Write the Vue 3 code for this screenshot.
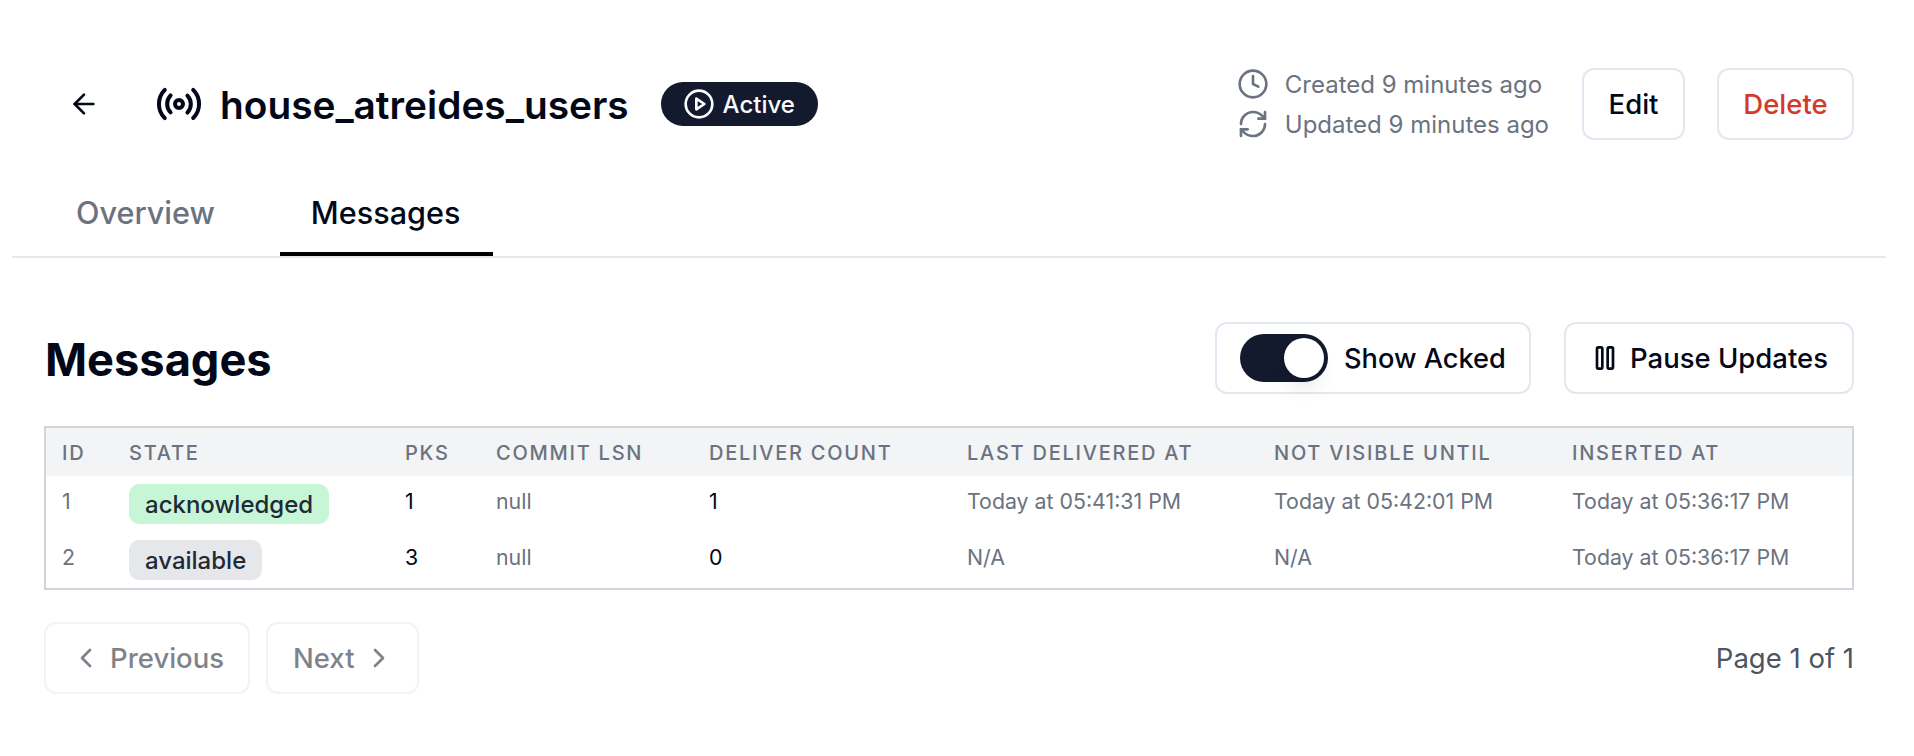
<script setup>
const columns = ['ID', 'State', 'PKs', 'Commit LSN', 'Deliver Count', 'Last Delivered At', 'Not Visible Until', 'Inserted At']
const rows = [
  { id: 1, state: 'acknowledged', tone: 'green', pks: 1, lsn: 'null', count: 1, delivered: 'Today at 05:41:31 PM', visible: 'Today at 05:42:01 PM', inserted: 'Today at 05:36:17 PM' },
  { id: 2, state: 'available', tone: 'grey', pks: 3, lsn: 'null', count: 0, delivered: 'N/A', visible: 'N/A', inserted: 'Today at 05:36:17 PM' }
]
</script>

<template>
  <div class="page">
    <header class="head">
      <div class="head-left">
        <button class="back" type="button" aria-label="Back">
          <svg class="i32" viewBox="0 0 24 24"><path d="m12 19-7-7 7-7" /><path d="M19 12H5" /></svg>
        </button>
        <svg class="i48" viewBox="0 0 24 24">
          <path d="M4.9 19.1C1 15.2 1 8.8 4.9 4.9" />
          <path d="M7.8 16.2c-2.3-2.3-2.3-6.1 0-8.5" />
          <circle cx="12" cy="12" r="2" />
          <path d="M16.2 7.8c2.3 2.3 2.3 6.1 0 8.5" />
          <path d="M19.1 4.9C23 8.8 23 15.1 19.1 19" />
        </svg>
        <h1 class="title">house_atreides_users</h1>
        <span class="badge">
          <svg class="i32" viewBox="0 0 24 24"><circle cx="12" cy="12" r="10" /><path d="m10 8 6 4-6 4z" /></svg>
          <span class="badge-label">Active</span>
        </span>
      </div>
      <div class="head-right">
        <div class="meta">
          <div class="meta-row">
            <svg class="i32" viewBox="0 0 24 24"><circle cx="12" cy="12" r="10" /><path d="M12 6v6l4 2" /></svg>
            <span>Created 9 minutes ago</span>
          </div>
          <div class="meta-row">
            <svg class="i32" viewBox="0 0 24 24">
              <path d="M3 12a9 9 0 0 1 9-9 9.75 9.75 0 0 1 6.74 2.74L21 8" /><path d="M21 3v5h-5" />
              <path d="M21 12a9 9 0 0 1-9 9 9.75 9.75 0 0 1-6.74-2.74L3 16" /><path d="M8 16H3v5" />
            </svg>
            <span>Updated 9 minutes ago</span>
          </div>
        </div>
        <button class="btn edit" type="button">Edit</button>
        <button class="btn delete" type="button">Delete</button>
      </div>
    </header>

    <nav class="tabs">
      <a class="tab">Overview</a>
      <a class="tab on">Messages</a>
    </nav>

    <section class="body">
      <div class="sec-head">
        <h2 class="sec-title">Messages</h2>
        <div class="sec-actions">
          <div class="btn toggle-box">
            <span class="switch"><span class="knob"></span></span>
            <span class="toggle-label">Show Acked</span>
          </div>
          <button class="btn pause" type="button">
            <svg class="i32" viewBox="0 0 24 24"><rect x="14" y="4" width="4" height="16" rx="1" /><rect x="6" y="4" width="4" height="16" rx="1" /></svg>
            Pause Updates
          </button>
        </div>
      </div>

      <div class="table">
        <div class="tr th">
          <div v-for="c in columns" :key="c" class="cell">{{ c }}</div>
        </div>
        <div v-for="r in rows" :key="r.id" class="tr">
          <div class="cell raised muted">{{ r.id }}</div>
          <div class="cell"><span class="pill" :class="r.tone">{{ r.state }}</span></div>
          <div class="cell raised">{{ r.pks }}</div>
          <div class="cell raised muted">{{ r.lsn }}</div>
          <div class="cell raised">{{ r.count }}</div>
          <div class="cell raised muted">{{ r.delivered }}</div>
          <div class="cell raised muted">{{ r.visible }}</div>
          <div class="cell raised muted">{{ r.inserted }}</div>
        </div>
      </div>

      <div class="pager">
        <div class="pager-btns">
          <button class="btn off prev" type="button">
            <svg class="i32" viewBox="0 0 24 24"><path d="m15 18-6-6 6-6" /></svg>
            Previous
          </button>
          <button class="btn off next" type="button">
            Next
            <svg class="i32" viewBox="0 0 24 24"><path d="m9 18 6-6-6-6" /></svg>
          </button>
        </div>
        <div class="page-no">Page 1 of 1</div>
      </div>
    </section>
  </div>
</template>

<style scoped>
.page {
  box-sizing: border-box;
  width: 1914px;
  height: 756px;
  padding: 68px 28px 0 12px;
  font-family: Inter, "Liberation Sans", sans-serif;
  color: #020817;
  background: #fff;
  overflow: hidden;
}
svg {
  fill: none;
  stroke: currentColor;
  stroke-width: 2;
  stroke-linecap: round;
  stroke-linejoin: round;
  flex: none;
}
.i32 { width: 32px; height: 32px; }
.i48 { width: 48px; height: 48px; }
button { font-family: inherit; background: none; padding: 0; border: 0; }

.head {
  height: 72px;
  display: flex;
  justify-content: space-between;
  align-items: center;
  padding: 0 32px;
}
.head-left { display: flex; align-items: center; }
.back {
  width: 80px;
  height: 72px;
  margin-right: 31px;
  display: flex;
  align-items: center;
  justify-content: center;
  color: #020817;
}
.title {
  margin: 2px 32px 0 17px;
  font-size: 38.8px;
  line-height: 48px;
  font-weight: 600;
}
.badge {
  display: flex;
  align-items: center;
  gap: 8px;
  height: 44px;
  padding: 0 23px 0 22px;
  border-radius: 22px;
  background: #131a2e;
  color: #f8fafc;
  font-size: 24px;
  font-weight: 500;
}
.badge-label { margin-top: 1px; }
.head-right { display: flex; align-items: center; }
.meta {
  display: flex;
  flex-direction: column;
  gap: 8px;
  margin-right: 33px;
  color: #6b7280;
  font-size: 24px;
}
.meta-row { display: flex; align-items: center; gap: 16px; height: 32px; }
.btn {
  box-sizing: border-box;
  display: flex;
  align-items: center;
  height: 72px;
  border: 2px solid #e2e8f0;
  border-radius: 12px;
  background: #fff;
  font-size: 27.5px;
  font-weight: 500;
  color: #020817;
}
.edit { width: 103px; justify-content: center; margin-right: 32px; }
.delete { width: 137px; justify-content: center; color: #d33a2c; }

.tabs {
  display: flex;
  gap: 32px;
  margin-top: 34px;
  padding-left: 32px;
  border-bottom: 2px solid #e2e8f0;
  height: 82px;
  box-sizing: content-box;
}
.tab {
  box-sizing: border-box;
  height: 82px;
  padding: 21px 33px 0 32px;
  font-size: 30.6px;
  line-height: 36px;
  font-weight: 500;
  color: #6b7280;
}
.tab.on { padding: 21px 33px 0 31px; color: #020817; border-bottom: 4px solid #000; }

.body { padding: 64px 32px 0; }
.sec-head {
  height: 72px;
  display: flex;
  justify-content: space-between;
  align-items: center;
}
.sec-title {
  margin: 3px 0 0 1px;
  font-size: 45.2px;
  line-height: 56px;
  font-weight: 700;
}
.sec-actions { display: flex; gap: 33px; }
.toggle-box { width: 316px; padding-left: 23px; gap: 16px; }
.toggle-label { font-size: 27.2px; }
.switch {
  box-sizing: border-box;
  width: 88px;
  height: 48px;
  padding: 4px;
  border-radius: 24px;
  background: #131a2e;
  display: flex;
  justify-content: flex-end;
}
.knob {
  width: 40px;
  height: 40px;
  border-radius: 50%;
  background: #fff;
  box-shadow: 0 13px 20px -4px rgba(0, 0, 0, 0.1), 0 5px 8px -5px rgba(0, 0, 0, 0.1);
}
.pause { width: 290px; padding-left: 23px; gap: 9px; }

.table {
  margin-top: 32px;
  border: 2px solid #d1d5db;
  height: 164px;
  box-sizing: border-box;
}
.tr {
  display: grid;
  grid-template-columns: 67px 276px 91px 213px 258px 307px 298px 1fr;
  height: 56px;
  align-items: center;
  font-size: 21.33px;
  color: #020817;
}
.th {
  height: 48px;
  padding-top: 2px;
  box-sizing: border-box;
  background: #f3f4f6;
  color: #6b7280;
  font-size: 20px;
  font-weight: 500;
  letter-spacing: 1.75px;
  text-transform: uppercase;
}
.cell { padding-left: 16px; white-space: nowrap; }
.raised { padding-bottom: 7px; }
.muted { color: #6b7280; }
.pill {
  display: inline-flex;
  align-items: center;
  height: 40px;
  padding: 0 16px;
  border-radius: 10px;
  font-size: 24px;
  font-weight: 450;
  color: #1f2937;
}
.green { background: #c6f6d5; }
.grey { background: #e5e7eb; }

.pager {
  margin-top: 32px;
  display: flex;
  justify-content: space-between;
  align-items: center;
}
.pager-btns { display: flex; gap: 16px; }
.off { opacity: 0.5; }
.prev { width: 206px; padding-left: 24px; gap: 8px; }
.next { width: 153px; padding-left: 25px; gap: 8px; }
.page-no { font-size: 27.5px; color: #4b5563; }
</style>

<style>
html, body { background: #fff; }
</style>
